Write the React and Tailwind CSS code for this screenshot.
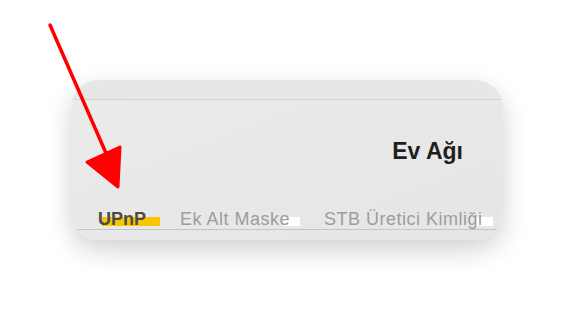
import React from 'react'

const tabs = [
  { label: 'Ek Alt Maske', mask: 'w-[17px]' },
  { label: 'STB Üretici Kimliği', mask: 'w-[18px]' },
]

export default function App() {
  return (
    <div className="relative w-[574px] h-[322px] bg-white overflow-hidden" style={{ fontFamily: '"Liberation Sans", Arial, sans-serif' }}>
      <div className="pt-[80px] pl-[71px]">
        <div className="w-[432px] h-[160px] rounded-[28px] shadow-[0_10px_26px_rgba(0,0,0,0.18)] overflow-hidden flex flex-col bg-gradient-to-br from-[#ececec] via-[#e8e8e8] to-[#e6e6e6]">
          <div className="h-[20px] shrink-0 border-b border-[#d4d4d4] bg-[#e7e7e7]" />
          <div className="flex-1 flex justify-end items-start pt-[40px] pr-[40px]">
            <h2 className="text-[23px] font-bold text-[#1f1f1f] leading-none">Ev Ağı</h2>
          </div>
          <div className="flex items-end border-b border-[#c4c4c4] pl-[27px] h-[32px] pb-[1px]">
            <span className="relative text-[18px] font-bold text-[#4a4a4a] leading-none">
              <span className="absolute left-[4px] right-[-14px] bottom-[2px] h-[9px] bg-[#f7c600]" />
              <span className="relative">UPnP</span>
            </span>
            {tabs.map((t) => (
              <span key={t.label} className="relative ml-[34px] text-[18px] tracking-[0.5px] text-[#9d9d9d] leading-none">
                <span className={`absolute right-[-10px] bottom-[2px] h-[9px] bg-white ${t.mask}`} />
                <span className="relative">{t.label}</span>
              </span>
            ))}
          </div>
          <div className="h-[10px] shrink-0" />
        </div>
      </div>
      <svg className="absolute left-0 top-0" width="574" height="322" viewBox="0 0 574 322">
        <path d="M50 25 L109 160" stroke="#ff0000" strokeWidth="3.5" strokeLinecap="round" />
        <path d="M87 162 L120 147 L118 187 Z" fill="#ff0000" stroke="#ff0000" strokeWidth="3" strokeLinejoin="round" />
      </svg>
    </div>
  )
}
